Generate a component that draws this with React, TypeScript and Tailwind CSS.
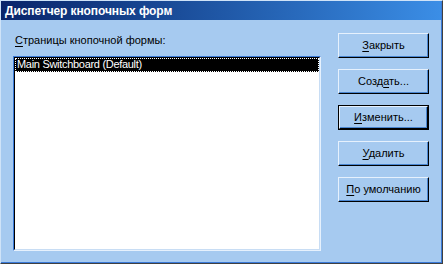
import React from 'react';

const font = "font-['Liberation_Sans',Arial,sans-serif]";

function Btn({ pre, u, post, isDefault }: { pre?: string; u: string; post?: string; isDefault?: boolean }) {
  const inner = (
    <div className="h-full w-full border border-t-[#e6f1fd] border-l-[#e6f1fd] border-r-[#000] border-b-[#000] shadow-[inset_-1px_-1px_0_#4a86d0] flex items-center justify-center text-[11px] text-black">
      <span>
        {pre}
        <u className="underline-offset-2">{u}</u>
        {post}
      </span>
    </div>
  );
  return (
    <div className={`w-[91px] h-[25px] ${isDefault ? 'border border-black' : ''}`}>{inner}</div>
  );
}

export default function App() {
  return (
    <div className={`w-[443px] h-[264px] bg-[#a6caf0] border-t border-l border-t-[#cfe3f8] border-l-[#cfe3f8] border-r border-b border-r-[#404040] border-b-[#404040] ${font}`}>
      <div className="h-full border-r border-b border-r-[#3a7ad8] border-b-[#3a7ad8] flex flex-col">
        {/* Title bar */}
        <div className="h-[19px] bg-gradient-to-r from-[#0a246a] to-[#3b8ee6] flex items-center pl-1 text-white text-[12px] font-bold tracking-[-0.1px]">
          Диспетчер кнопочных форм
        </div>

        <div className="flex flex-1 pl-3 pr-3">
          {/* Left column */}
          <div className="flex flex-col w-[308px] pt-[14px]">
            <div className="text-[11px] text-black leading-[13px] pl-[2px]">
              <u className="underline-offset-2">С</u>траницы кнопочной формы:
            </div>
            <div className="mt-[9px] h-[195px] border border-t-[#3a7ad8] border-l-[#3a7ad8] border-r-[#e6f1fd] border-b-[#e6f1fd]">
              <div className="h-full border border-t-black border-l-black border-r-[#c8ddf4] border-b-[#c8ddf4] bg-white">
                <div className="h-[14px] bg-black text-white text-[11px] leading-[12px] pl-[2px] tracking-[-0.3px] outline-1 outline-dotted outline-white -outline-offset-1">
                  Main Switchboard (Default)
                </div>
              </div>
            </div>
          </div>

          {/* Buttons */}
          <div className="ml-auto flex flex-col gap-[11px] pt-[13px]">
            <Btn u="З" post="акрыть" />
            <Btn pre="Созд" u="а" post="ть..." />
            <Btn u="И" post="зменить..." isDefault />
            <Btn u="У" post="далить" />
            <Btn u="П" post="о умолчанию" />
          </div>
        </div>
      </div>
    </div>
  );
}
